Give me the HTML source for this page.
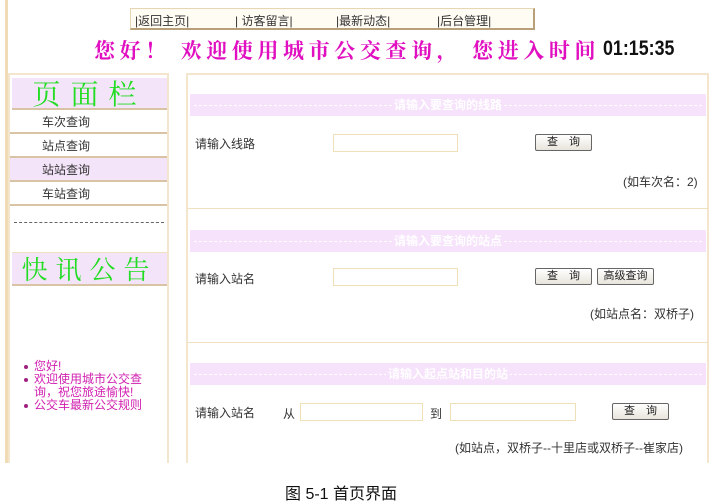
<!DOCTYPE html>
<html><head><meta charset="utf-8">
<style>
*{margin:0;padding:0;box-sizing:border-box}
body{width:713px;height:500px;background:#fff;position:relative;overflow:hidden;font-family:"Liberation Sans","Noto Sans CJK SC","WenQuanYi Zen Hei",sans-serif;font-size:12px;color:#333}
.a{position:absolute}
.frame{left:5px;top:0;width:3px;height:463px;background:#f0dcb4}
.nav{left:130px;top:8px;width:405px;height:22px;background:#fffcf4;border:1px solid #e6d6b4;border-right:2px solid #b8a07a;border-bottom:2px solid #b8a07a;font-size:12px;color:#333}
.nav span{position:absolute;top:3px}
.title{left:94px;top:35px;font-size:21px;font-weight:bold;color:#e010c0;letter-spacing:4.6px;white-space:nowrap;font-family:"Noto Serif CJK SC","WenQuanYi Zen Hei",serif}
.time{left:603px;top:37px;font-size:21px;font-weight:bold;color:#111;font-family:"Liberation Sans",sans-serif;transform:scaleX(0.85);transform-origin:left}
.left{left:8px;top:73px;width:161px;height:390px;border:2px solid #f3e6cc;border-bottom:none}
.hd{position:absolute;left:2px;width:155px;background:#f4e4fa;border-bottom:2px solid #d8c4a4;color:#22dd22;text-align:center;font-family:"Noto Serif CJK SC",serif}
.mi{position:absolute;left:0;width:157px;height:24px;border-bottom:2px solid #d8c4a4;padding:3px 0 0 32px;font-size:12px;color:#333;background:#fff}
.dash{left:14px;top:222px;width:150px;border-top:1px dashed #666}
.ann{left:24px;top:360px;color:#d020b0;font-size:12px;line-height:13px;width:136px}
.ann div{position:relative;padding-left:10px}
.ann div:before{content:"";position:absolute;left:0;top:5px;width:4px;height:4px;border-radius:2px;background:#a02080}
.right{left:186px;top:73px;width:523px;height:390px;border:2px solid #f3e6cc;border-bottom:none}
.sep{left:188px;width:520px;height:1px;background:#f0e0c0}
.band{left:190px;width:516px;height:22px;background:#f6e2fb;color:#fff;font-weight:bold;text-align:center;font-size:12px;line-height:22px}
.band:before{content:"";position:absolute;left:4px;right:4px;top:11px;border-top:1px dashed #fff}
.band span{position:relative;background:#f6e2fb;padding:0 2px}
.lb{font-size:12px;color:#333}
.in{height:18px;border:1px solid #f0e0b8;background:#fff}
.bt{height:17px;border:1px solid #666;border-radius:2px;background:linear-gradient(#fff,#e8e4dc);font-size:11px;text-align:center;line-height:15px;color:#222}
.ex{font-size:12px;color:#333;white-space:nowrap}
.cap{left:285px;top:480px;font-size:16px;color:#111}
</style></head><body>
<div class="a frame"></div>
<div class="a nav"><span style="left:4px">|返回主页|</span><span style="left:104px">| 访客留言|</span><span style="left:205px">|最新动态|</span><span style="left:306px">|后台管理|</span></div>
<div class="a title">您好！ 欢迎使用城市公交查询， 您进入时间</div>
<div class="a time">01:15:35</div>

<div class="a left">
 <div class="hd" style="top:3px;height:32px;font-size:28px;line-height:30px;letter-spacing:10px">页面栏</div>
 <div class="mi" style="top:35px">车次查询</div>
 <div class="mi" style="top:59px">站点查询</div>
 <div class="mi" style="top:83px;background:#f4e4fa">站站查询</div>
 <div class="mi" style="top:107px">车站查询</div>
 <div class="hd" style="top:177px;height:34px;font-size:26px;line-height:32px;letter-spacing:8px;border-top:1px solid #f0e0c0">快讯公告</div>
</div>
<div class="a dash"></div>
<div class="a ann"><div>您好!</div><div>欢迎使用城市公交查询，祝您旅途愉快!</div><div>公交车最新公交规则</div></div>

<div class="a right"></div>
<div class="a band" style="top:94px"><span>请输入要查询的线路</span></div>
<div class="a lb" style="left:195px;top:135px">请输入线路</div>
<div class="a in" style="left:333px;top:134px;width:125px"></div>
<div class="a bt" style="left:535px;top:134px;width:57px">查　询</div>
<div class="a ex" style="left:623px;top:173px">(如车次名：2)</div>
<div class="a sep" style="top:208px"></div>

<div class="a band" style="top:230px"><span>请输入要查询的站点</span></div>
<div class="a lb" style="left:195px;top:270px">请输入站名</div>
<div class="a in" style="left:333px;top:268px;width:125px"></div>
<div class="a bt" style="left:535px;top:268px;width:57px">查　询</div>
<div class="a bt" style="left:597px;top:268px;width:57px">高级查询</div>
<div class="a ex" style="left:590px;top:305px">(如站点名：双桥子)</div>
<div class="a sep" style="top:342px"></div>

<div class="a band" style="top:363px"><span>请输入起点站和目的站</span></div>
<div class="a lb" style="left:195px;top:404px">请输入站名</div>
<div class="a lb" style="left:283px;top:405px">从</div>
<div class="a in" style="left:300px;top:403px;width:123px"></div>
<div class="a lb" style="left:430px;top:405px">到</div>
<div class="a in" style="left:450px;top:403px;width:126px"></div>
<div class="a bt" style="left:612px;top:403px;width:57px">查　询</div>
<div class="a ex" style="left:455px;top:439px">(如站点，双桥子--十里店或双桥子--崔家店)</div>

<div class="a cap">图 5-1 首页界面</div>
</body></html>
